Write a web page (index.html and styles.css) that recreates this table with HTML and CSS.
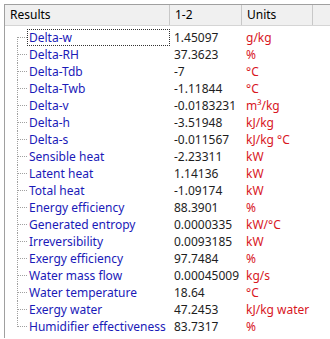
FILE: index.html
```html
<!DOCTYPE html>
<html>
<head>
<meta charset="utf-8">
<link rel="stylesheet" href="styles.css">
</head>
<body>
<div class="panel">
  <div class="header">
    <div class="hcell">Results</div>
    <div class="hcell">1-2</div>
    <div class="hcell">Units</div>
    <div class="hcell last"></div>
  </div>
  <div class="tree">
    <div class="row first"><div class="label"><span class="focus">Delta-w</span></div><div class="val">1.45097</div><div class="unit">g/kg</div></div>
    <div class="row"><div class="label">Delta-RH</div><div class="val">37.3623</div><div class="unit">%</div></div>
    <div class="row"><div class="label">Delta-Tdb</div><div class="val">-7</div><div class="unit">°C</div></div>
    <div class="row"><div class="label">Delta-Twb</div><div class="val">-1.11844</div><div class="unit">°C</div></div>
    <div class="row"><div class="label">Delta-v</div><div class="val">-0.0183231</div><div class="unit">m³/kg</div></div>
    <div class="row"><div class="label">Delta-h</div><div class="val">-3.51948</div><div class="unit">kJ/kg</div></div>
    <div class="row"><div class="label">Delta-s</div><div class="val">-0.011567</div><div class="unit">kJ/kg °C</div></div>
    <div class="row"><div class="label">Sensible heat</div><div class="val">-2.23311</div><div class="unit">kW</div></div>
    <div class="row"><div class="label">Latent heat</div><div class="val">1.14136</div><div class="unit">kW</div></div>
    <div class="row"><div class="label">Total heat</div><div class="val">-1.09174</div><div class="unit">kW</div></div>
    <div class="row"><div class="label">Energy efficiency</div><div class="val">88.3901</div><div class="unit">%</div></div>
    <div class="row"><div class="label">Generated entropy</div><div class="val">0.0000335</div><div class="unit">kW/°C</div></div>
    <div class="row"><div class="label">Irreversibility</div><div class="val">0.0093185</div><div class="unit">kW</div></div>
    <div class="row"><div class="label">Exergy efficiency</div><div class="val">97.7484</div><div class="unit">%</div></div>
    <div class="row"><div class="label">Water mass flow</div><div class="val">0.00045009</div><div class="unit">kg/s</div></div>
    <div class="row"><div class="label">Water temperature</div><div class="val">18.64</div><div class="unit">°C</div></div>
    <div class="row"><div class="label">Exergy water</div><div class="val">47.2453</div><div class="unit">kJ/kg water</div></div>
    <div class="row lastrow"><div class="label">Humidifier effectiveness</div><div class="val">83.7317</div><div class="unit">%</div></div>
  </div>
</div>
</body>
</html>
```
FILE: styles.css
```css
html, body {
  margin: 0;
  padding: 0;
  background: #ffffff;
}
body {
  width: 330px;
  height: 339px;
  overflow: hidden;
  font-family: "Noto Sans", "Open Sans", sans-serif;
  font-size: 12px;
}
.panel {
  margin: 4px 0 0 4px;
  border-top: 1px solid #a0a0a0;
  border-left: 1px solid #a0a0a0;
  height: 334px;
  box-sizing: border-box;
}
.header {
  display: grid;
  grid-template-columns: 165px 72px 71px 1fr;
  height: 21px;
  background: #f0f0f0;
  border-bottom: 1px solid #d5d5d5;
  box-sizing: border-box;
}
.hcell {
  border-right: 1px solid #c8c8c8;
  padding-left: 5px;
  line-height: 20px;
  color: #000;
}
.hcell.last {
  border-right: none;
}
.tree {
  padding-top: 3px;
}
.row {
  display: grid;
  grid-template-columns: 165px 72px 71px 1fr;
  height: 17px;
  line-height: 17px;
  white-space: nowrap;
}
.label {
  color: #1a1ab8;
  padding-left: 24px;
  background-image:
    repeating-linear-gradient(to bottom, #a0a0a0 0 1px, transparent 1px 2px),
    repeating-linear-gradient(to right, #a0a0a0 0 1px, transparent 1px 2px);
  background-size: 1px 100%, 9px 1px;
  background-position: 12px 0, 13px 8px;
  background-repeat: no-repeat;
  overflow: visible;
}
.row.first .label {
  background-size: 1px 9px, 9px 1px;
  background-position: 12px 8px, 13px 8px;
}
.row.lastrow .label {
  background-size: 1px 9px, 9px 1px;
  background-position: 12px 0, 13px 8px;
}
.focus {
  display: inline-block;
  margin-left: -2px;
  padding-left: 1px;
  width: 143px;
  height: 17px;
  box-sizing: border-box;
  border: 1px dotted #333;
  line-height: 15px;
}
.val {
  color: #1e1e1e;
  padding-left: 4px;
}
.unit {
  color: #d8161e;
  padding-left: 4px;
}
```
